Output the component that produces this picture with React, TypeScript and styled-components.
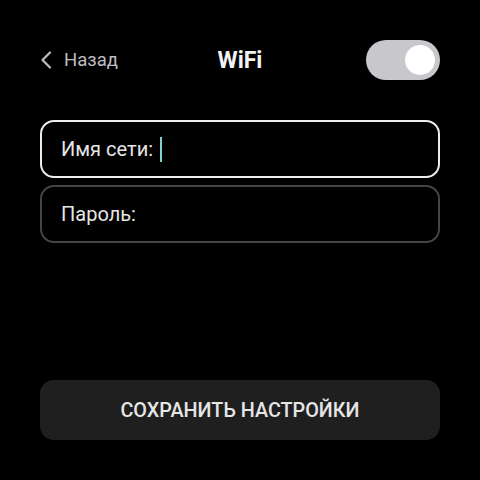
import React from 'react';
import styled, { createGlobalStyle } from 'styled-components';

const GlobalStyle = createGlobalStyle`
  html, body {
    margin: 0;
    padding: 0;
    background: #000;
  }
  body {
    font-family: Roboto, "Noto Sans", sans-serif;
  }
`

const Screen = styled.div`
  width: 480px;
  height: 480px;
  box-sizing: border-box;
  padding: 40px 40px 40px;
  display: flex;
  flex-direction: column;
  background: #000;
`

const Header = styled.div`
  height: 40px;
  display: grid;
  grid-template-columns: 1fr auto 1fr;
  align-items: center;
`

const BackButton = styled.div`
  display: flex;
  align-items: center;
  gap: 11px;
  color: #bdbdc2;
  font-size: 18.5px;
`

const Title = styled.div`
  color: #f2f2f2;
  font-size: 23px;
  font-weight: 700;
`

const Toggle = styled.div<{ on?: boolean }>`
  justify-self: end;
  width: 74px;
  height: 40px;
  border-radius: 20px;
  background: #c7c7cc;
  box-sizing: border-box;
  padding: 5px;
  display: flex;
  justify-content: ${p => (p.on ? 'flex-end' : 'flex-start')};
`

const Knob = styled.div`
  width: 30px;
  height: 30px;
  border-radius: 50%;
  background: #fff;
`

const Fields = styled.div`
  margin-top: 40px;
  display: flex;
  flex-direction: column;
  gap: 7px;
`

const Field = styled.div<{ active?: boolean }>`
  height: 58px;
  box-sizing: border-box;
  border: 2px solid ${p => (p.active ? '#ededed' : '#454545')};
  border-radius: 14px;
  display: flex;
  align-items: center;
  padding-left: 19px;
  color: #e6e6e6;
  font-size: 20px;
`

const Caret = styled.span`
  display: inline-block;
  width: 2px;
  height: 25px;
  margin-left: 7px;
  background: #7fd3c8;
`

const Spacer = styled.div`
  flex: 1;
`

const SaveButton = styled.div`
  height: 60px;
  border-radius: 14px;
  background: #1f1f1f;
  color: #e6e6e6;
  font-size: 19.8px;
  font-weight: 500;
  display: flex;
  align-items: center;
  justify-content: center;
`

function App() {
  return (
    <Screen>
      <GlobalStyle />
      <Header>
        <BackButton>
          <svg width="13" height="18" viewBox="0 0 13 18">
            <path d="M10 1.5 L2.5 9 L10 16.5" fill="none" stroke="#bdbdc2" strokeWidth="2.2" strokeLinecap="round" strokeLinejoin="round" />
          </svg>
          Назад
        </BackButton>
        <Title>WiFi</Title>
        <Toggle on>
          <Knob />
        </Toggle>
      </Header>
      <Fields>
        <Field active>
          Имя сети:<Caret />
        </Field>
        <Field>Пароль:</Field>
      </Fields>
      <Spacer />
      <SaveButton>СОХРАНИТЬ НАСТРОЙКИ</SaveButton>
    </Screen>
  );
}

export default App;
